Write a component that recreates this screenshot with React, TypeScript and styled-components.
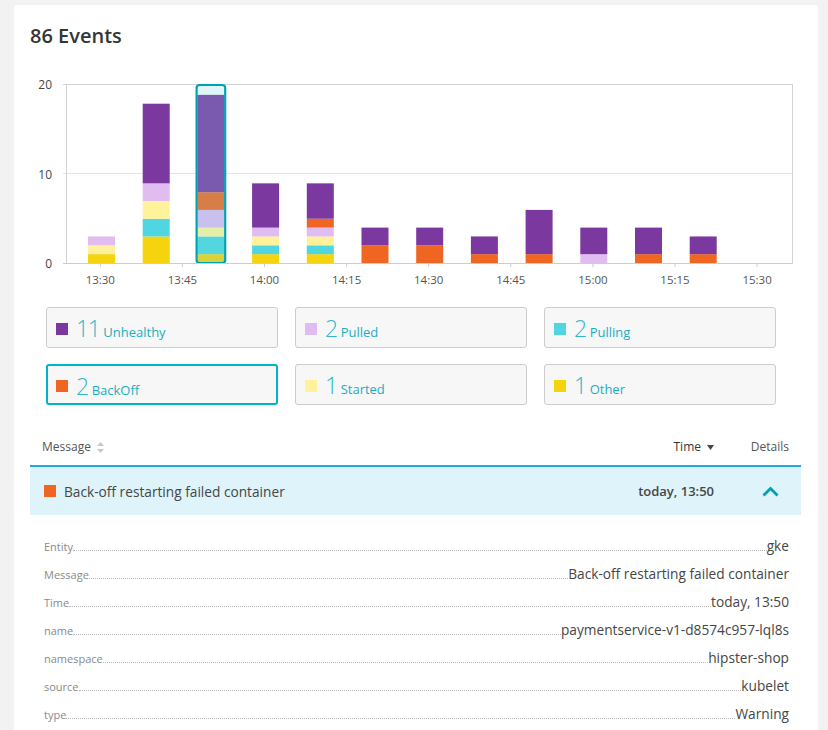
import React from 'react'
import styled, { createGlobalStyle } from 'styled-components'

const GlobalStyle = createGlobalStyle`
  body {
    margin: 0;
    background: #f2f2f2;
    font-family: "Open Sans", "Noto Sans", sans-serif;
    color: #454646;
  }
`

const COLORS = {
  unhealthy: '#7b389e',
  pulled: '#e0bcf1',
  pulling: '#50d6e0',
  backoff: '#ef6622',
  started: '#fff29a',
  other: '#f5d30f',
}

// colours of the selected bar (tinted by the highlight)
const SELECTED = {
  unhealthy: '#7a5aae',
  pulled: '#c9c0ee',
  pulling: '#54d6df',
  backoff: '#d67d48',
  started: '#e6efa8',
  other: '#dbd23a',
}

type Key = keyof typeof COLORS
const ORDER: Key[] = ['other', 'pulling', 'started', 'pulled', 'backoff', 'unhealthy']

const bars: Partial<Record<Key, number>>[] = [
  { other: 1, started: 1, pulled: 1 },
  { other: 3, pulling: 2, started: 2, pulled: 2, unhealthy: 9 },
  { other: 1, pulling: 2, started: 1, pulled: 2, backoff: 2, unhealthy: 11 },
  { other: 1, pulling: 1, started: 1, pulled: 1, unhealthy: 5 },
  { other: 1, pulling: 1, started: 1, pulled: 1, backoff: 1, unhealthy: 4 },
  { backoff: 2, unhealthy: 2 },
  { backoff: 2, unhealthy: 2 },
  { backoff: 1, unhealthy: 2 },
  { backoff: 1, unhealthy: 5 },
  { pulled: 1, unhealthy: 3 },
  { backoff: 1, unhealthy: 3 },
  { backoff: 1, unhealthy: 2 },
]

const ticks = ['13:30', '13:45', '14:00', '14:15', '14:30', '14:45', '15:00', '15:15', '15:30']

const legend = [
  { key: 'unhealthy' as Key, count: 11, label: 'Unhealthy' },
  { key: 'pulled' as Key, count: 2, label: 'Pulled' },
  { key: 'pulling' as Key, count: 2, label: 'Pulling' },
  { key: 'backoff' as Key, count: 2, label: 'BackOff', active: true },
  { key: 'started' as Key, count: 1, label: 'Started' },
  { key: 'other' as Key, count: 1, label: 'Other' },
]

const details = [
  ['Entity', 'gke'],
  ['Message', 'Back-off restarting failed container'],
  ['Time', 'today, 13:50'],
  ['name', 'paymentservice-v1-d8574c957-lql8s'],
  ['namespace', 'hipster-shop'],
  ['source', 'kubelet'],
  ['type', 'Warning'],
]

const Card = styled.div`
  margin: 5px 10px 0 14px;
  padding: 19px 17px 20px 16px;
  background: #ffffff;
  border-radius: 3px;
`

const Title = styled.h1`
  margin: 0;
  font-size: 20px;
  line-height: 24px;
  font-weight: 600;
  color: #353535;
`

const ChartSvg = styled.svg`
  display: block;
  margin-top: 27px;
  font-family: "Open Sans", "Noto Sans", sans-serif;
`

const LegendGrid = styled.div`
  display: grid;
  grid-template-columns: repeat(3, 232px);
  gap: 16px 17px;
  padding-left: 16px;
  margin-top: 17px;
`

const LegendButton = styled.button<{ $active?: boolean }>`
  display: flex;
  align-items: baseline;
  height: 41px;
  box-sizing: border-box;
  padding: 0 0 0 ${p => (p.$active ? 8 : 9)}px;
  background: #f7f7f7;
  border: ${p => (p.$active ? '2px solid #00b5c8' : '1px solid #cccccc')};
  border-radius: 3px;
  font-family: inherit;
  cursor: pointer;
  text-align: left;
`

const Swatch = styled.span<{ $color: string }>`
  width: 12px;
  height: 12px;
  background: ${p => p.$color};
  margin-right: 8px;
  align-self: center;
  margin-top: 2px;
`

const Count = styled.span`
  font-size: 23px;
  font-weight: 300;
  color: #2fb8c9;
  line-height: 1;
  letter-spacing: -1.5px;
  margin-right: 4px;
  padding-top: 9px;
`

const Label = styled.span`
  font-size: 13px;
  color: #1aaec0;
`

const Table = styled.div`
  margin-top: 32px;
`

const HeadRow = styled.div`
  display: grid;
  grid-template-columns: 1fr 120px 87px;
  height: 30px;
  box-sizing: border-box;
  padding-top: 2px;
  align-items: start;
  border-bottom: 2px solid #1ea7e1;
  font-size: 12px;
  line-height: 16px;
  color: #555555;
`

const HeadCell = styled.div<{ $align?: string; $pad?: number }>`
  display: flex;
  align-items: center;
  justify-content: ${p => p.$align || 'flex-start'};
  gap: 6px;
  padding: 0 ${p => p.$pad ?? 0}px 0 ${p => (p.$align ? 0 : 12)}px;
`

const SortIcon = styled.svg`
  display: block;
`

const Row = styled.div`
  display: grid;
  grid-template-columns: 1fr 120px 87px;
  height: 48px;
  align-items: center;
  background: #dff3fa;
  font-size: 13.7px;
`

const RowMessage = styled.div`
  display: flex;
  align-items: center;
  gap: 8px;
  padding-left: 14px;
  color: #454646;
`

const RowTime = styled.div`
  text-align: right;
  font-weight: 600;
  font-size: 13px;
  color: #454646;
`

const RowToggle = styled.div`
  display: flex;
  justify-content: flex-end;
  padding-right: 22px;
`

const Details = styled.div`
  padding: 15px 12px 0 14px;
`

const DetailRow = styled.div`
  display: flex;
  align-items: flex-end;
  height: 28px;
  box-sizing: border-box;
  padding-bottom: 4px;
`

const DetailKey = styled.span`
  font-size: 11px;
  color: #8a8a8a;
  line-height: 14px;
`

const Leader = styled.span`
  flex: 1;
  border-bottom: 1px dotted #b8b8b8;
  margin-bottom: 3px;
`

const DetailValue = styled.span`
  font-size: 13.7px;
  color: #454646;
  line-height: 16px;
`

const PLOT_L = 36
const PLOT_R = 763
const PLOT_T = 9
const PLOT_B = 188
const UNIT = 8.85

const Chart: React.FC = () => (
  <ChartSvg width={771} height={215}>
    <line x1={PLOT_L - 3} x2={PLOT_R} y1={PLOT_T + 0.5} y2={PLOT_T + 0.5} stroke="#d2d3d8" />
    <line x1={PLOT_L - 3} x2={PLOT_R} y1={PLOT_T + 89.5} y2={PLOT_T + 89.5} stroke="#e3e4ea" />
    <line x1={PLOT_L + 0.5} x2={PLOT_L + 0.5} y1={PLOT_T} y2={PLOT_B} stroke="#d2d3d8" />
    <line x1={PLOT_R - 0.5} x2={PLOT_R - 0.5} y1={PLOT_T} y2={PLOT_B} stroke="#d2d3d8" />
    {['20', '10', '0'].map((t, i) => (
      <text key={t} x={22} y={PLOT_T + i * 89.5 + 5} fontSize={12} fill="#454646" textAnchor="end">
        {t}
      </text>
    ))}
    {bars.map((b, i) => {
      const cx = 71.5 + i * 54.7
      const selected = i === 2
      let y = PLOT_B
      return (
        <g key={i}>
          {selected && (
            <rect x={cx - 13.5} y={PLOT_T} width={27} height={PLOT_B - PLOT_T} fill="#e0f7fa" />
          )}
          {ORDER.map(k => {
            const v = b[k]
            if (!v) return null
            const h = v * UNIT
            y -= h
            return (
              <rect
                key={k}
                x={cx - 13.5}
                y={y}
                width={27}
                height={h}
                fill={selected ? SELECTED[k] : COLORS[k]}
              />
            )
          })}
          {selected && (
            <rect
              x={cx - 14.3}
              y={PLOT_T + 1}
              width={28.6}
              height={PLOT_B - PLOT_T - 1}
              rx={3}
              fill="none"
              stroke="#00a1b2"
              strokeWidth={2.2}
            />
          )}
        </g>
      )
    })}
    <line x1={PLOT_L - 3} x2={PLOT_R} y1={PLOT_B + 0.5} y2={PLOT_B + 0.5} stroke="#c5cde0" />
    {ticks.map((t, i) => {
      const x = 70.3 + i * 82.1
      return (
        <g key={t}>
          <line x1={x} x2={x} y1={PLOT_B} y2={PLOT_B + 4} stroke="#c5cde0" />
          <text x={x} y={PLOT_B + 21} fontSize={11.5} fill="#555555" textAnchor="middle">
            {t}
          </text>
        </g>
      )
    })}
  </ChartSvg>
)

const App: React.FC = () => (
  <>
    <GlobalStyle />
    <Card>
      <Title>86 Events</Title>
      <Chart />
      <LegendGrid>
        {legend.map(l => (
          <LegendButton key={l.label} $active={l.active}>
            <Swatch $color={COLORS[l.key]} />
            <Count>{l.count}</Count>
            <Label>{l.label}</Label>
          </LegendButton>
        ))}
      </LegendGrid>
      <Table>
        <HeadRow>
          <HeadCell>
            Message
            <SortIcon width={7} height={11} viewBox="0 0 7 11">
              <path d="M3.5 0 L7 4 H0 Z M3.5 11 L7 7 H0 Z" fill="#c8c8c8" />
            </SortIcon>
          </HeadCell>
          <HeadCell $align="flex-end" style={{ color: '#353535' }}>
            Time
            <SortIcon width={7} height={5} viewBox="0 0 7 5">
              <path d="M0 0 H7 L3.5 5 Z" fill="#454646" />
            </SortIcon>
          </HeadCell>
          <HeadCell $align="flex-end" $pad={12}>
            Details
          </HeadCell>
        </HeadRow>
        <Row>
          <RowMessage>
            <Swatch $color={COLORS.backoff} style={{ marginRight: 0, marginTop: 0 }} />
            Back-off restarting failed container
          </RowMessage>
          <RowTime>today, 13:50</RowTime>
          <RowToggle>
            <svg width={17} height={11} viewBox="0 0 17 11">
              <path d="M1.5 9.5 L8.5 2.5 L15.5 9.5" fill="none" stroke="#00a1b2" strokeWidth={2.8} />
            </svg>
          </RowToggle>
        </Row>
        <Details>
          {details.map(([k, v]) => (
            <DetailRow key={k}>
              <DetailKey>{k}</DetailKey>
              <Leader />
              <DetailValue>{v}</DetailValue>
            </DetailRow>
          ))}
        </Details>
      </Table>
    </Card>
  </>
)

export default App
